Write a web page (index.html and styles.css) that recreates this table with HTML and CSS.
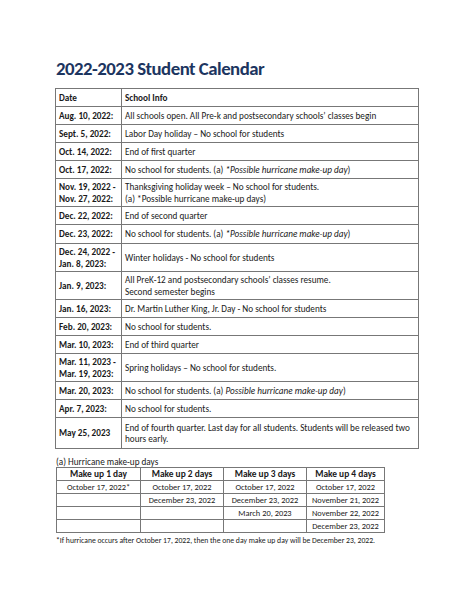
FILE: index.html
```html
<!DOCTYPE html>
<html>
<head>
<meta charset="utf-8">
<link rel="stylesheet" href="styles.css">
</head>
<body>
<div class="page">
  <h1 class="title">2022-2023 Student Calendar</h1>
  <table class="cal">
    <colgroup><col class="c-date"><col class="c-info"></colgroup>
    <tr class="r1"><th>Date</th><th>School Info</th></tr>
    <tr class="r1"><td class="d">Aug. 10, 2022:</td><td>All schools open. All Pre-k and postsecondary schools’ classes begin</td></tr>
    <tr class="r1"><td class="d">Sept. 5, 2022:</td><td>Labor Day holiday – No school for students</td></tr>
    <tr class="r1"><td class="d">Oct. 14, 2022:</td><td>End of first quarter</td></tr>
    <tr class="r1"><td class="d">Oct. 17, 2022:</td><td>No school for students. (a) <i>*Possible hurricane make-up day</i>)</td></tr>
    <tr class="r2"><td class="d">Nov. 19, 2022 -<br>Nov. 27, 2022:</td><td>Thanksgiving holiday week – No school for students.<br>(a) *Possible hurricane make-up days)</td></tr>
    <tr class="r1"><td class="d">Dec. 22, 2022:</td><td>End of second quarter</td></tr>
    <tr class="r1b"><td class="d">Dec. 23, 2022:</td><td>No school for students. (a) <i>*Possible hurricane make-up day</i>)</td></tr>
    <tr class="r2"><td class="d">Dec. 24, 2022 -<br>Jan. 8, 2023:</td><td>Winter holidays - No school for students</td></tr>
    <tr class="r2"><td class="d">Jan. 9, 2023:</td><td>All PreK-12 and postsecondary schools’ classes resume.<br>Second semester begins</td></tr>
    <tr class="r1"><td class="d">Jan. 16, 2023:</td><td>Dr. Martin Luther King, Jr. Day - No school for students</td></tr>
    <tr class="r1"><td class="d">Feb. 20, 2023:</td><td>No school for students.</td></tr>
    <tr class="r1"><td class="d">Mar. 10, 2023:</td><td>End of third quarter</td></tr>
    <tr class="r2"><td class="d">Mar. 11, 2023 -<br>Mar. 19, 2023:</td><td>Spring holidays – No school for students.</td></tr>
    <tr class="r1"><td class="d">Mar. 20, 2023:</td><td>No school for students. (a) <i>Possible hurricane make-up day</i>)</td></tr>
    <tr class="r1"><td class="d">Apr. 7, 2023:</td><td>No school for students.</td></tr>
    <tr class="r3"><td class="d">May 25, 2023</td><td>End of fourth quarter. Last day for all students. Students will be released two hours early.</td></tr>
  </table>
  <p class="sub">(a) Hurricane make-up days</p>
  <table class="mk">
    <colgroup><col class="m1"><col class="m2"><col class="m3"><col class="m4"></colgroup>
    <tr><th>Make up 1 day</th><th>Make up 2 days</th><th>Make up 3 days</th><th>Make up 4 days</th></tr>
    <tr><td>October 17, 2022*</td><td>October 17, 2022</td><td>October 17, 2022</td><td>October 17, 2022</td></tr>
    <tr><td></td><td>December 23, 2022</td><td>December 23, 2022</td><td>November 21, 2022</td></tr>
    <tr><td></td><td></td><td>March 20, 2023</td><td>November 22, 2022</td></tr>
    <tr><td></td><td></td><td></td><td>December 23, 2022</td></tr>
  </table>
  <p class="note">*If hurricane occurs after October 17, 2022, then the one day make up day will be December 23, 2022.</p>
</div>
</body>
</html>
```
FILE: styles.css
```css
html, body {
  margin: 0;
  padding: 0;
  background: #fff;
}
body {
  font-family: Carlito, Lato, "Open Sans", sans-serif;
  color: #1a1a1a;
}
.page {
  padding: 56px 0 0 55px;
  width: 364px;
}
.title {
  margin: 0 0 0 1px;
  font-size: 18.8px;
  line-height: 26px;
  font-weight: 700;
  color: #1c3560;
  letter-spacing: -0.5px;
}
.cal {
  margin-top: 6px;
  border-collapse: collapse;
  width: 364px;
  table-layout: fixed;
  font-size: 9.2px;
}
.c-date { width: 66px; }
.cal th, .cal td {
  border: 1px solid #777;
  padding: 0 2px 0 3px;
  text-align: left;
  vertical-align: middle;
  line-height: 11.5px;
  white-space: nowrap;
}
.cal tr.r3 td { white-space: normal; }
.cal th { font-weight: 700; }
.cal td.d { font-weight: 700; }
.cal .r1 { height: 18px; }
.cal .r1b { height: 19px; }
.cal .r2 { height: 28px; }
.cal .r3 { height: 31px; }
.sub {
  margin: 7px 0 0 1px;
  font-size: 9.2px;
  line-height: 11px;
}
.mk {
  margin-left: 1px;
  border-collapse: collapse;
  table-layout: fixed;
  width: 329px;
  font-size: 8.4px;
}
.m1 { width: 84px; }
.m2 { width: 83px; }
.m3 { width: 83px; }
.mk th, .mk td {
  border: 1px solid #777;
  height: 12px;
  padding: 0;
  text-align: center;
  line-height: 11px;
  white-space: nowrap;
}
.mk th { font-weight: 700; font-size: 9.4px; }
.note {
  margin: 3px 0 0 1px;
  font-size: 7.7px;
  line-height: 9px;
}
```
